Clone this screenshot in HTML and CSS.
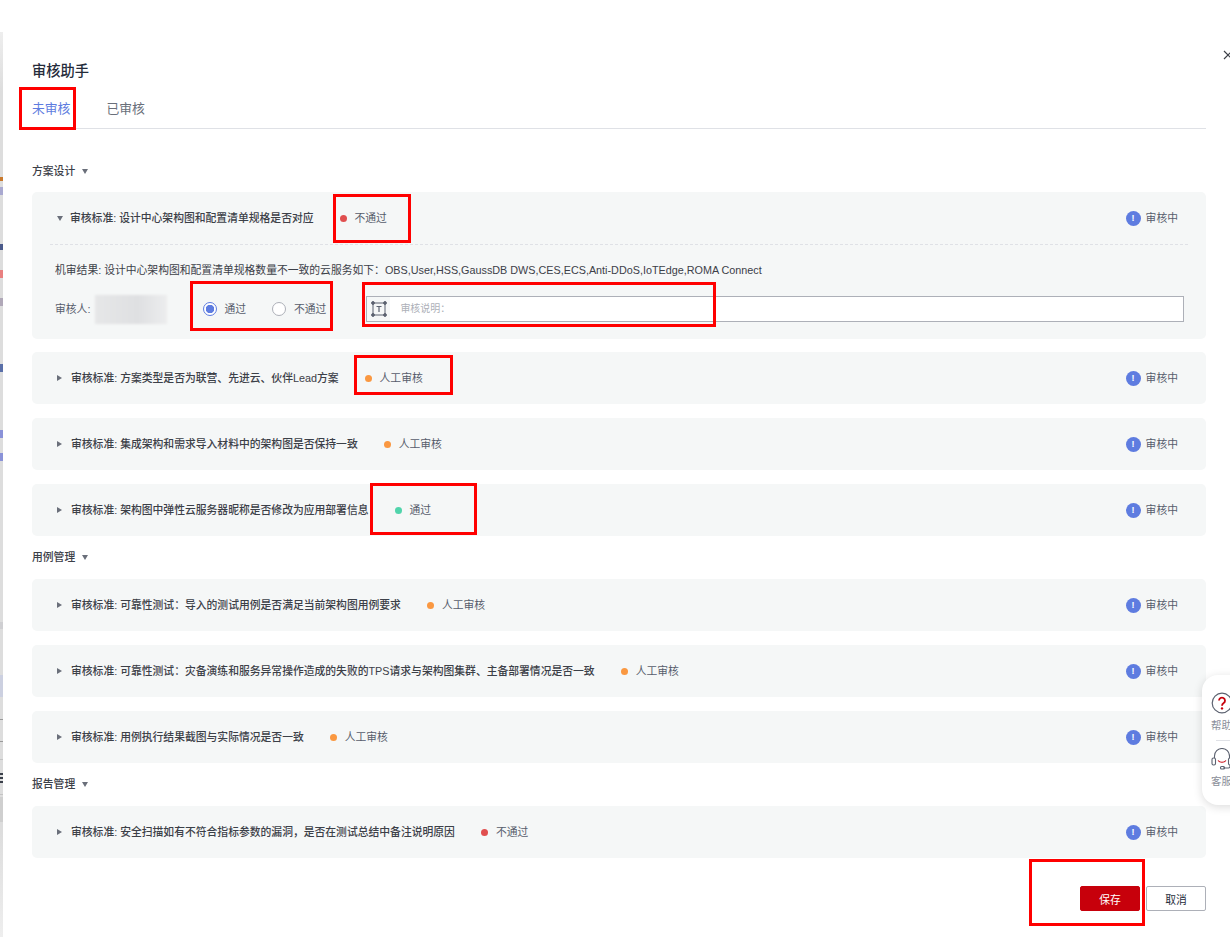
FILE: index.html
```html
<!DOCTYPE html>
<html lang="zh-CN">
<head>
<meta charset="utf-8">
<title>审核助手</title>
<link rel="stylesheet" href="styles.css">
</head>
<body>
<div class="backdrop"></div>
<main class="drawer">
  <h1 class="title">审核助手</h1>
  <nav class="tabs"><span class="tab active">未审核</span><span class="tab">已审核</span></nav>

  <div class="group first"><span>方案设计</span><i class="caret down"></i></div>
  <section class="card open">
    <div class="row"><i class="caret small down"></i><b class="rule">审核标准: 设计中心架构图和配置清单规格是否对应</b><span class="status"><i class="dot red"></i>不通过</span><span class="state"><i class="info">!</i>审核中</span></div>
    <div class="detail">
      <p class="result">机审结果: 设计中心架构图和配置清单规格数量不一致的云服务如下：OBS,User,HSS,GaussDB DWS,CES,ECS,Anti-DDoS,IoTEdge,ROMA Connect</p>
      <div class="review">
        <span class="label">审核人: </span><span class="blur"></span>
        <label class="radio on"><i></i>通过</label><label class="radio"><i></i>不通过</label>
        <div class="input"><span class="input-icon"><svg width="16" height="16" viewBox="0 0 16 16" fill="none" stroke="#5c6270"><rect x="2" y="2" width="12" height="12"/><circle cx="2" cy="2" r="1.4" fill="#5c6270"/><circle cx="14" cy="2" r="1.4" fill="#5c6270"/><circle cx="2" cy="14" r="1.4" fill="#5c6270"/><circle cx="14" cy="14" r="1.4" fill="#5c6270"/><path d="M5.5 5.5h5M8 5.5v5.5" stroke-width="1.2"/></svg></span><span class="placeholder">审核说明：</span></div>
      </div>
    </div>
  </section>
  <section class="card"><div class="row"><i class="caret small"></i><b class="rule">审核标准: 方案类型是否为联营、先进云、伙伴Lead方案</b><span class="status"><i class="dot orange"></i>人工审核</span><span class="state"><i class="info">!</i>审核中</span></div></section>
  <section class="card"><div class="row"><i class="caret small"></i><b class="rule">审核标准: 集成架构和需求导入材料中的架构图是否保持一致</b><span class="status"><i class="dot orange"></i>人工审核</span><span class="state"><i class="info">!</i>审核中</span></div></section>
  <section class="card"><div class="row"><i class="caret small"></i><b class="rule">审核标准: 架构图中弹性云服务器昵称是否修改为应用部署信息</b><span class="status"><i class="dot green"></i>通过</span><span class="state"><i class="info">!</i>审核中</span></div></section>

  <div class="group"><span>用例管理</span><i class="caret down"></i></div>
  <section class="card"><div class="row"><i class="caret small"></i><b class="rule">审核标准: 可靠性测试：导入的测试用例是否满足当前架构图用例要求</b><span class="status"><i class="dot orange"></i>人工审核</span><span class="state"><i class="info">!</i>审核中</span></div></section>
  <section class="card"><div class="row"><i class="caret small"></i><b class="rule">审核标准: 可靠性测试：灾备演练和服务异常操作造成的失败的TPS请求与架构图集群、主备部署情况是否一致</b><span class="status"><i class="dot orange"></i>人工审核</span><span class="state"><i class="info">!</i>审核中</span></div></section>
  <section class="card"><div class="row"><i class="caret small"></i><b class="rule">审核标准: 用例执行结果截图与实际情况是否一致</b><span class="status"><i class="dot orange"></i>人工审核</span><span class="state"><i class="info">!</i>审核中</span></div></section>

  <div class="group"><span>报告管理</span><i class="caret down"></i></div>
  <section class="card"><div class="row"><i class="caret small"></i><b class="rule">审核标准: 安全扫描如有不符合指标参数的漏洞，是否在测试总结中备注说明原因</b><span class="status"><i class="dot red"></i>不通过</span><span class="state"><i class="info">!</i>审核中</span></div></section>

  <footer class="actions"><button class="btn primary">保存</button><button class="btn">取消</button></footer>
</main>

<svg class="close" width="10" height="10" viewBox="0 0 10 10" stroke="#3c4048" stroke-width="1.2"><path d="M1 1l8 8M9 1l-8 8"/></svg>

<aside class="float">
  <div class="float-item"><svg width="22" height="22" viewBox="0 0 22 22"><circle cx="11" cy="11" r="9.8" fill="#fff" stroke="#5c6270" stroke-width="1.2"/><path d="M8 8.6a3 3 0 1 1 4.7 2.5c-1.2.8-1.7 1.4-1.7 2.6" fill="none" stroke="#c7000b" stroke-width="1.8"/><circle cx="11" cy="16.4" r="1.2" fill="#c7000b"/></svg><span>帮助</span></div>
  <div class="float-sep"></div>
  <div class="float-item"><svg width="22" height="22" viewBox="0 0 22 22" fill="none" stroke="#5c6270" stroke-width="1.1"><path d="M3.5 10V8a7.5 7.5 0 0 1 15 0v2"/><rect x="1" y="10" width="3.5" height="7" rx="1.5"/><rect x="17.5" y="10" width="3.5" height="7" rx="1.5"/><path d="M7 12.5c2 2.4 6 2.4 8 0" stroke="#c7000b"/><path d="M19 17v1.5a1.5 1.5 0 0 1-1.5 1.5H12"/><rect x="9.5" y="18.5" width="4" height="2.5" rx="1"/></svg><span>客服</span></div>
</aside>

<div class="mark" id="m1"></div><div class="mark" id="m2"></div><div class="mark" id="m3"></div><div class="mark" id="m4"></div><div class="mark" id="m5"></div><div class="mark" id="m6"></div><div class="mark" id="m7"></div>
</body>
</html>
```
FILE: styles.css
```css
* { box-sizing: border-box; }
html, body { margin: 0; height: 100%; }
body {
  position: relative;
  width: 1230px;
  height: 937px;
  overflow: hidden;
  background: #fff;
  color: #3c4048;
  font: 10.8px/16px "Liberation Sans", "Noto Sans CJK SC", sans-serif;
}
.backdrop {
  position: absolute; left: 0; top: 32px; bottom: 0; width: 3px;
  background:
    linear-gradient(180deg,
      transparent 145px, #c9792c 145px, #c9792c 149px, transparent 149px,
      transparent 155px, #a9a9d0 155px, #a9a9d0 163px, transparent 163px,
      transparent 212px, #4a5a8a 212px, #4a5a8a 218px, transparent 218px,
      transparent 238px, #e88080 238px, #e88080 246px, transparent 246px,
      transparent 266px, #b0a8b8 266px, #b0a8b8 274px, transparent 274px,
      transparent 332px, #5a6fa8 332px, #5a6fa8 340px, transparent 340px,
      transparent 398px, #8a92d8 398px, #8a92d8 406px, transparent 406px,
      transparent 421px, #8a92d8 421px, #8a92d8 429px, transparent 429px,
      transparent 590px, #cfcfd2 590px, #cfcfd2 597px, transparent 597px,
      transparent 643px, #ccd0e0 643px, #ccd0e0 665px, transparent 665px,
      transparent 687px, #9a9a9a 687px, #9a9a9a 688px, transparent 688px,
      transparent 709px, #9a9a9a 709px, #9a9a9a 710px, transparent 710px,
      transparent 727px, #c4c4c4 727px, #c4c4c4 728px, transparent 728px,
      transparent 741px, #3a3f4a 741px, #3a3f4a 743px, transparent 743px,
      transparent 745px, #3a3f4a 745px, #3a3f4a 747px, transparent 747px,
      transparent 749px, #3a3f4a 749px, #3a3f4a 751px, transparent 751px,
      transparent 762px, #c4c4c4 762px, #c4c4c4 763px, transparent 763px,
      transparent 765px, #cfcfcf 765px, #cfcfcf 790px, transparent 790px),
    linear-gradient(180deg, #eeeeee 0, #dddddd 60px, #dddddd 800px, #eeeeee 905px);
}
.drawer {
  width: 1174px;
  margin-left: 32px;
  padding-top: 61px;
}
.title { margin: 0; font-size: 14.25px; line-height: 20px; font-weight: 500; color: #252b3a; }
.tabs { display: flex; gap: 36px; height: 48px; padding-top: 18px; border-bottom: 1px solid #dfe1e6; }
.tab { font-size: 12.8px; line-height: 20px; color: #6a6f7a; }
.tab.active { color: #5e7ce0; }
.group { display: flex; align-items: center; gap: 7px; height: 16px; margin-top: 13px; margin-bottom: 14px; font-weight: 500; color: #3c4048; }
.group.first { margin-top: 34px; margin-bottom: 13px; }
.card { background: #f5f7f7; border-radius: 5px; margin-bottom: 14px; }
.card.open { margin-bottom: 13px; }
.card:has(+ .group) { margin-bottom: 13px; }
.row { display: flex; align-items: center; height: 52px; padding: 0 28px 0 25px; }
.caret { display: inline-block; width: 0; height: 0; border-style: solid; }
.caret.down { border-width: 5px 3.5px 0; border-color: #6a6f7a transparent transparent; }
.caret.small { border-width: 3px 0 3px 5px; border-color: transparent transparent transparent #6a6f7a; margin-right: 9px; }
.caret.small.down { border-width: 5px 3.5px 0; border-color: #6a6f7a transparent transparent; margin-right: 7px; }
.rule { font-weight: 500; color: #3c4048; }
.status { display: inline-flex; align-items: center; margin-left: 26px; color: #575d6c; }
.dot { width: 7px; height: 7px; border-radius: 50%; margin-right: 8px; }
.dot.red { background: #e04f4f; }
.dot.orange { background: #fa9841; }
.dot.green { background: #50d4ab; }
.state { margin-left: auto; display: inline-flex; align-items: center; gap: 5px; color: #575d6c; }
.info { width: 15px; height: 15px; border-radius: 50%; background: #5e7ce0; color: #fff; font: bold 9px/15px "Liberation Sans", sans-serif; text-align: center; }
.detail { margin: 0 18px; border-top: 1px dashed #dfe1e6; padding: 0 4px 16px 5px; }
.result { margin: 17px 0 0; line-height: 16px; color: #3c4048; white-space: nowrap; }
.review { display: flex; align-items: center; height: 29px; margin-top: 16px; }
.label { color: #575d6c; white-space: pre; margin-right: 1.5px; }
.blur { width: 72px; height: 29px; margin-top: 2px; background: linear-gradient(90deg, #e6e7e8, #dfe0e2 60%, #ecedee); filter: blur(1px); }
.radio { display: inline-flex; align-items: center; gap: 7.5px; color: #575d6c; }
.radio i { width: 14px; height: 14px; border: 1px solid #adb0b8; border-radius: 50%; background: #fff; }
.radio:first-of-type { margin-left: 36px; margin-right: 26.5px; }
.radio.on i { border-color: #5e7ce0; background: radial-gradient(circle, #5e7ce0 0 4px, #fff 4.5px); }
.input { display: flex; align-items: center; height: 26px; flex: 1; margin-left: 40px; border: 1px solid #adb0b8; background: #fff; }
.input-icon { width: 23px; height: 100%; background: #f5f7f7; display: flex; align-items: center; justify-content: center; }
.placeholder { margin-left: 10px; font-size: 10px; color: #adb0b8; }
.actions { display: flex; justify-content: flex-end; gap: 6px; margin-top: 28px; }
.btn { width: 60px; height: 25px; padding: 0; border: 1px solid #adb0b8; border-radius: 2px; background: #fff; font: 10.8px "Liberation Sans", "Noto Sans CJK SC", sans-serif; color: #252b3a; }
.btn.primary { border-color: #c7000b; background: #c7000b; color: #fff; }
.close { position: absolute; left: 1223px; top: 50px; }
.float {
  position: absolute; left: 1202px; top: 675px; width: 60px; height: 130px;
  background: #fff; border-radius: 16px; box-shadow: 0 2px 10px rgba(0,0,0,.14);
  padding: 17px 0 0 9px;
}
.float-item { display: flex; flex-direction: column; width: 30px; gap: 5px; font-size: 10.5px; line-height: 13px; color: #8a8e99; }
.float-sep { width: 14px; height: 1px; background: #dfe1e6; margin: 8px 0 7px 5px; }
.mark { position: absolute; border: 3px solid #f00; }
#m1 { left: 19px; top: 87px; width: 57px; height: 43px; }
#m2 { left: 333px; top: 194px; width: 78px; height: 49px; }
#m3 { left: 190px; top: 281px; width: 143px; height: 50px; }
#m4 { left: 362px; top: 282px; width: 354px; height: 45px; }
#m5 { left: 354px; top: 355px; width: 99px; height: 40px; }
#m6 { left: 370px; top: 483px; width: 107px; height: 52px; }
#m7 { left: 1029px; top: 859px; width: 116px; height: 67px; }
```
